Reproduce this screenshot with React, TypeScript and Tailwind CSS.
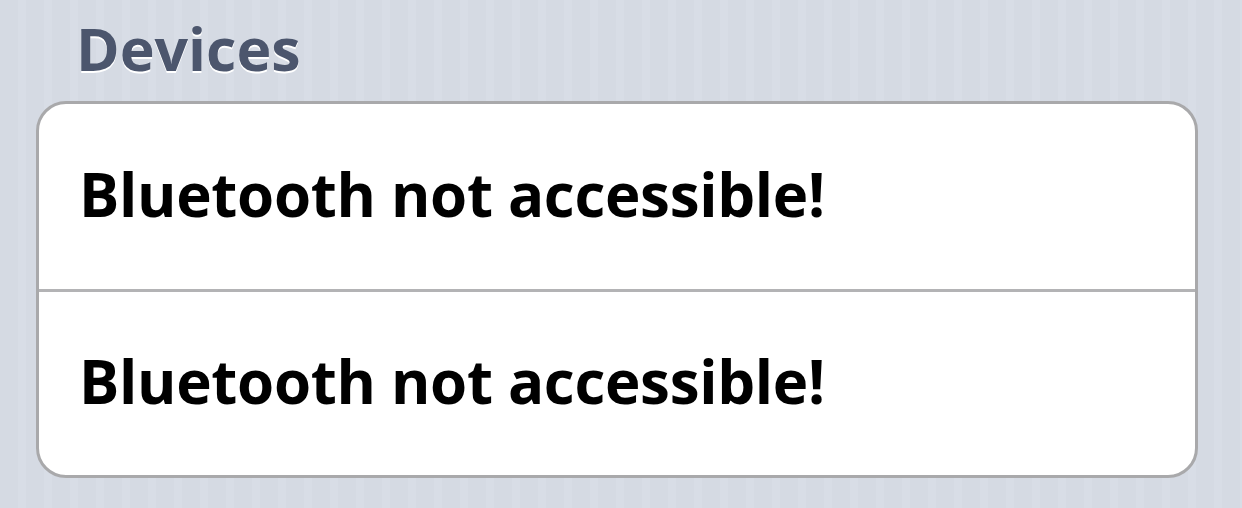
export default function App() {
  const rows = ['Bluetooth not accessible!', 'Bluetooth not accessible!'];

  return (
    <div className="h-[508px] w-[1242px] overflow-hidden bg-[repeating-linear-gradient(90deg,#d5dae3_0px,#d5dae3_18px,#d8dde6_18px,#d8dde6_26px)] font-['Open_Sans',sans-serif]">
      <h2 className="pl-[76px] pt-[8px] text-[59px] leading-[80px] font-bold text-[#4c566d] [text-shadow:0_2px_0_#ffffff]">
        Devices
      </h2>
      <div className="ml-[36px] mr-[44px] mt-[13px] overflow-hidden rounded-[30px] border-[3px] border-[#a9a9ab] bg-white">
        {rows.map((label, i) => (
          <div
            key={i}
            className={
              i > 0
                ? 'flex h-[186px] items-center border-t-[3px] border-[#b3b3b5] pl-[40px] pb-[6px]'
                : 'flex h-[185px] items-center pl-[40px] pb-[6px]'
            }
          >
            <span className="text-[60px] font-bold tracking-[-0.3px] text-black">{label}</span>
          </div>
        ))}
      </div>
    </div>
  );
}
